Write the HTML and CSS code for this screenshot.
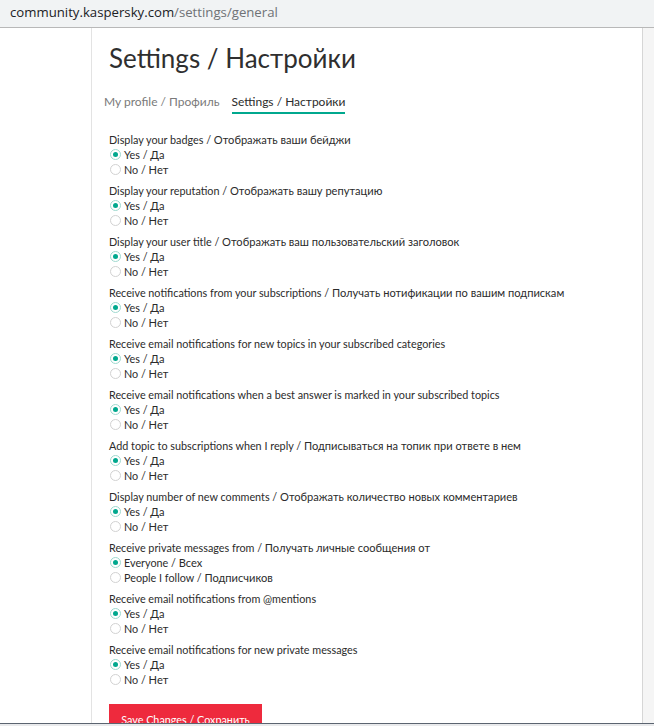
FILE: index.html
```html
<!DOCTYPE html>
<html>
<head>
<meta charset="utf-8">
<link rel="stylesheet" href="styles.css">
</head>
<body>
<div class="urlbar"><span class="host">community.kaspersky.com</span><span class="path">/settings/general</span></div>
<div class="page">
  <div class="side-left"></div>
  <div class="main">
    <h1 class="title">Settings / Настройки</h1>
    <div class="tabs">
      <span class="tab">My profile / Профиль</span>
      <span class="tab active">Settings / Настройки</span>
    </div>
    <form class="settings">
      <div class="group">
        <div class="label">Display your badges / <span class="ru">Отображать ваши бейджи</span></div>
        <label class="opt"><span class="radio on"></span>Yes / <span class="ru">Да</span></label>
        <label class="opt"><span class="radio"></span>No / <span class="ru">Нет</span></label>
      </div>
      <div class="group">
        <div class="label">Display your reputation / <span class="ru">Отображать вашу репутацию</span></div>
        <label class="opt"><span class="radio on"></span>Yes / <span class="ru">Да</span></label>
        <label class="opt"><span class="radio"></span>No / <span class="ru">Нет</span></label>
      </div>
      <div class="group">
        <div class="label">Display your user title / <span class="ru">Отображать ваш пользовательский заголовок</span></div>
        <label class="opt"><span class="radio on"></span>Yes / <span class="ru">Да</span></label>
        <label class="opt"><span class="radio"></span>No / <span class="ru">Нет</span></label>
      </div>
      <div class="group">
        <div class="label">Receive notifications from your subscriptions / <span class="ru">Получать нотификации по вашим подпискам</span></div>
        <label class="opt"><span class="radio on"></span>Yes / <span class="ru">Да</span></label>
        <label class="opt"><span class="radio"></span>No / <span class="ru">Нет</span></label>
      </div>
      <div class="group">
        <div class="label">Receive email notifications for new topics in your subscribed categories</div>
        <label class="opt"><span class="radio on"></span>Yes / <span class="ru">Да</span></label>
        <label class="opt"><span class="radio"></span>No / <span class="ru">Нет</span></label>
      </div>
      <div class="group">
        <div class="label">Receive email notifications when a best answer is marked in your subscribed topics</div>
        <label class="opt"><span class="radio on"></span>Yes / <span class="ru">Да</span></label>
        <label class="opt"><span class="radio"></span>No / <span class="ru">Нет</span></label>
      </div>
      <div class="group">
        <div class="label">Add topic to subscriptions when I reply / <span class="ru">Подписываться на топик при ответе в нем</span></div>
        <label class="opt"><span class="radio on"></span>Yes / <span class="ru">Да</span></label>
        <label class="opt"><span class="radio"></span>No / <span class="ru">Нет</span></label>
      </div>
      <div class="group">
        <div class="label">Display number of new comments / <span class="ru">Отображать количество новых комментариев</span></div>
        <label class="opt"><span class="radio on"></span>Yes / <span class="ru">Да</span></label>
        <label class="opt"><span class="radio"></span>No / <span class="ru">Нет</span></label>
      </div>
      <div class="group">
        <div class="label">Receive private messages from / <span class="ru">Получать личные сообщения от</span></div>
        <label class="opt"><span class="radio on"></span>Everyone / <span class="ru">Всех</span></label>
        <label class="opt"><span class="radio"></span>People I follow / <span class="ru">Подписчиков</span></label>
      </div>
      <div class="group">
        <div class="label">Receive email notifications from @mentions</div>
        <label class="opt"><span class="radio on"></span>Yes / <span class="ru">Да</span></label>
        <label class="opt"><span class="radio"></span>No / <span class="ru">Нет</span></label>
      </div>
      <div class="group">
        <div class="label">Receive email notifications for new private messages</div>
        <label class="opt"><span class="radio on"></span>Yes / <span class="ru">Да</span></label>
        <label class="opt"><span class="radio"></span>No / <span class="ru">Нет</span></label>
      </div>
      <button type="button" class="save">Save Changes / Сохранить</button>
    </form>
  </div>
  <div class="side-right"></div>
</div>
<div class="bottom-edge"></div>
</body>
</html>
```
FILE: styles.css
```css
html, body {
  margin: 0;
  padding: 0;
  height: 726px;
  overflow: hidden;
  background: #fff;
}
body {
  font-family: "Lato", "Open Sans", sans-serif;
  color: #2b2b2b;
  position: relative;
}
.ru {
  font-size: 1.03em;
  line-height: 1;
}
.urlbar {
  height: 28px;
  box-sizing: border-box;
  background: #f1f3f4;
  border-bottom: 1px solid #b8b8b8;
  padding-left: 10px;
  font-size: 13.2px;
  line-height: 24px;
  font-family: "Open Sans", sans-serif;
}
.urlbar .host { color: #202124; }
.urlbar .path { color: #6f7276; }
.page {
  display: flex;
  height: 698px;
}
.side-left {
  width: 91px;
  border-right: 1px solid #e3e3e3;
  background: #fff;
}
.main {
  flex: 1;
  padding-left: 17px;
  overflow: hidden;
}
.side-right {
  width: 11px;
  border-left: 1px solid #d6d6d6;
  background: #f5f5f5;
}
.title {
  margin: 12px 0 0 0;
  font-size: 26px;
  font-weight: 400;
  line-height: 36px;
  color: #2f2f2f;
}
.tabs {
  display: flex;
  gap: 12px;
  margin: 18px 0 0 -5px;
  font-size: 12px;
}
.tab {
  color: #7a7a7a;
  padding-bottom: 3px;
  border-bottom: 2px solid transparent;
  line-height: 15px;
}
.tab.active {
  color: #2b2b2b;
  border-bottom-color: #00a88e;
}
.settings {
  margin-top: 18px;
  font-size: 10.8px;
  line-height: 15px;
}
.group {
  margin-bottom: 6px;
}
.label {
  color: #2b2b2b;
  height: 15px;
  white-space: nowrap;
}
.opt {
  display: flex;
  align-items: center;
  height: 15px;
  color: #2b2b2b;
  white-space: pre;
}
.radio {
  width: 9px;
  height: 9px;
  border: 1px solid #d2d2d2;
  border-radius: 50%;
  margin: 0 3px 0 1px;
  box-sizing: content-box;
  position: relative;
  background: #fff;
  flex: none;
}
.radio.on {
  border-color: #9fd9cf;
}
.radio.on::after {
  content: "";
  position: absolute;
  left: 2px;
  top: 2px;
  width: 5px;
  height: 5px;
  border-radius: 50%;
  background: #00a88e;
}
.save {
  display: block;
  margin-top: 17px;
  height: 40px;
  width: 153px;
  border: 0;
  background: #ee2a3d;
  color: #fff;
  font-family: inherit;
  font-size: 10.8px;
  padding: 0 0 8px 0;
  text-align: center;
  line-height: 16px;
  box-sizing: border-box;
}
.bottom-edge {
  position: absolute;
  left: 0;
  right: 0;
  bottom: 0;
  height: 3px;
  border-top: 1px solid #5b6470;
  background: #e9eaec;
  box-sizing: border-box;
}
```
